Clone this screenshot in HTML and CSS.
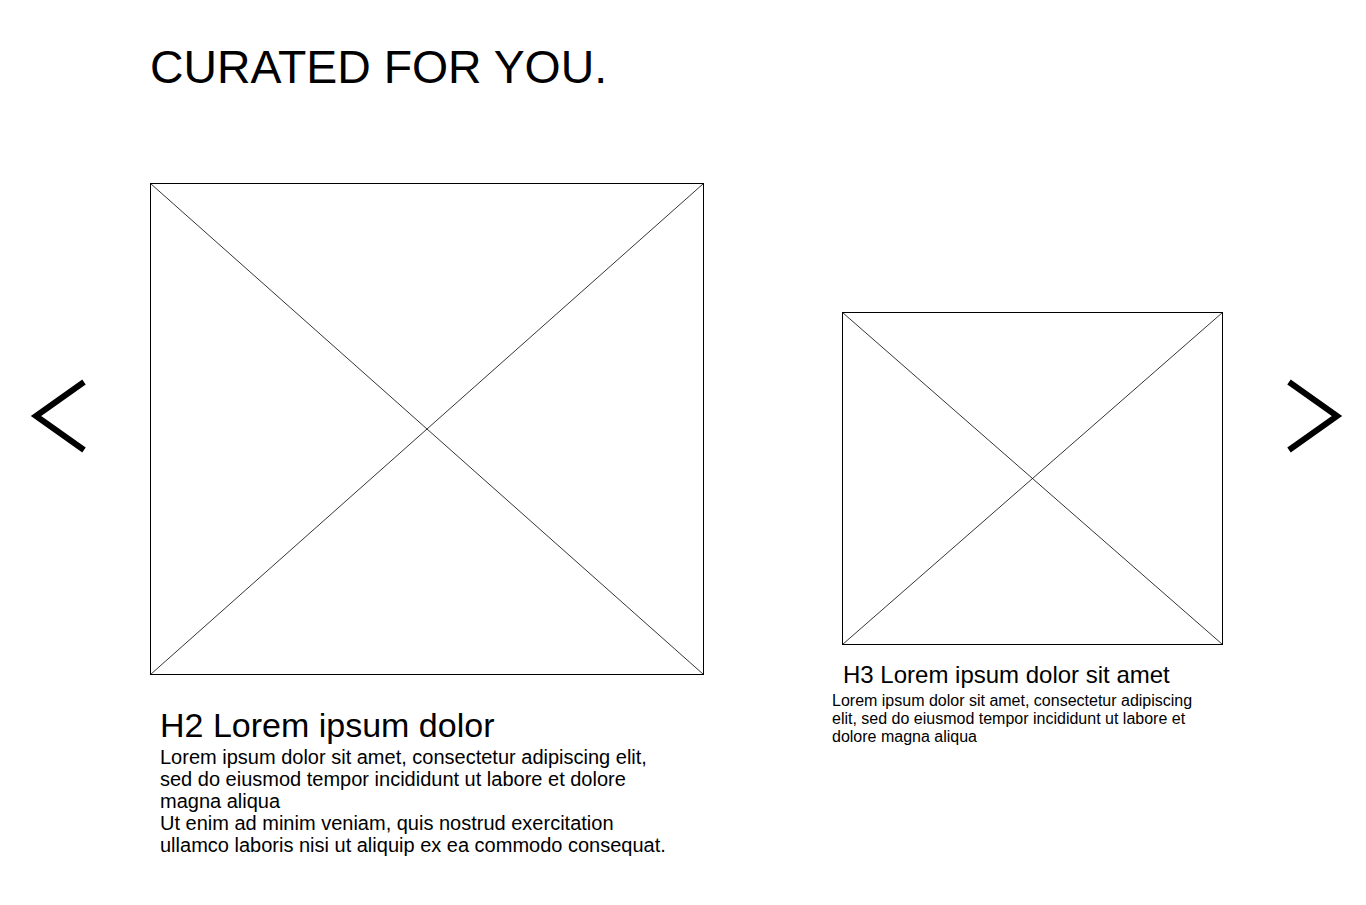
FILE: index.html
```html
<!DOCTYPE html>
<html lang="en">

<head>
    <meta charset="UTF-8">
    <meta name="viewport" content="width=device-width, initial-scale=1.0">
    <title>Curated For You</title>
    <link rel="stylesheet" href="styles.css">
</head>

<body>
    <h1 class="title">CURATED FOR YOU.</h1>

    <div class="carousel">
        <button class="nav prev" aria-label="Previous">
            <svg width="60" height="80" viewBox="0 0 60 80">
                <polyline points="56,6 8,40 56,74" fill="none" stroke="#000" stroke-width="6" />
            </svg>
        </button>

        <div class="card main">
            <svg class="placeholder" width="554" height="492" viewBox="0 0 554 492">
                <rect x="0.5" y="0.5" width="553" height="491" fill="none" stroke="#000" />
                <line x1="0.5" y1="0.5" x2="553.5" y2="491.5" stroke="#000" stroke-width="0.8" />
                <line x1="553.5" y1="0.5" x2="0.5" y2="491.5" stroke="#000" stroke-width="0.8" />
            </svg>
            <h2>H2 Lorem ipsum dolor</h2>
            <p>Lorem ipsum dolor sit amet, consectetur adipiscing elit, sed do eiusmod tempor incididunt ut labore et dolore magna aliqua<br>Ut enim ad minim veniam, quis nostrud exercitation ullamco laboris nisi ut aliquip ex ea commodo consequat.</p>
        </div>

        <div class="card side">
            <svg class="placeholder" width="381" height="333" viewBox="0 0 381 333">
                <rect x="0.5" y="0.5" width="380" height="332" fill="none" stroke="#000" />
                <line x1="0.5" y1="0.5" x2="380.5" y2="332.5" stroke="#000" stroke-width="0.8" />
                <line x1="380.5" y1="0.5" x2="0.5" y2="332.5" stroke="#000" stroke-width="0.8" />
            </svg>
            <h3>H3 Lorem ipsum dolor sit amet</h3>
            <p>Lorem ipsum dolor sit amet, consectetur adipiscing elit, sed do eiusmod tempor incididunt ut labore et dolore magna aliqua</p>
        </div>

        <button class="nav next" aria-label="Next">
            <svg width="60" height="80" viewBox="0 0 60 80">
                <polyline points="5,6 53,40 5,74" fill="none" stroke="#000" stroke-width="6" />
            </svg>
        </button>
    </div>
</body>

</html>
```

FILE: styles.css
```css
body {
    margin: 0;
    font-family: "Liberation Sans", Arial, sans-serif;
    color: #000;
    background-color: #fff;
}

.title {
    margin: 0;
    padding: 41px 0 0 150px;
    font-size: 46.4px;
    font-weight: normal;
    line-height: 52px;
}

.carousel {
    display: flex;
    align-items: flex-start;
    margin-top: 90px;
}

.nav {
    display: block;
    padding: 0;
    border: none;
    background: none;
    cursor: pointer;
    margin-top: 193px;
}

.nav svg {
    display: block;
}

.nav.prev {
    margin-left: 28px;
    margin-right: 62px;
}

.nav.next {
    margin-left: auto;
    margin-right: 22px;
}

.placeholder {
    display: block;
}

.card.main {
    width: 554px;
}

.card.main h2 {
    margin: 31px 0 0;
    padding-left: 10px;
    font-size: 34px;
    font-weight: normal;
    line-height: 38px;
}

.card.main p {
    width: 520px;
    margin: 2px 0 0;
    padding-left: 10px;
    font-size: 20px;
    line-height: 22px;
}

.card.side {
    width: 391px;
    margin-left: 128px;
    margin-top: 129px;
}

.card.side .placeholder {
    margin-left: 10px;
}

.card.side h3 {
    margin: 16px 0 0;
    padding-left: 11px;
    font-size: 24px;
    font-weight: normal;
    line-height: 27px;
}

.card.side p {
    width: 381px;
    margin: 4px 0 0;
    font-size: 16px;
    line-height: 18px;
}
```
